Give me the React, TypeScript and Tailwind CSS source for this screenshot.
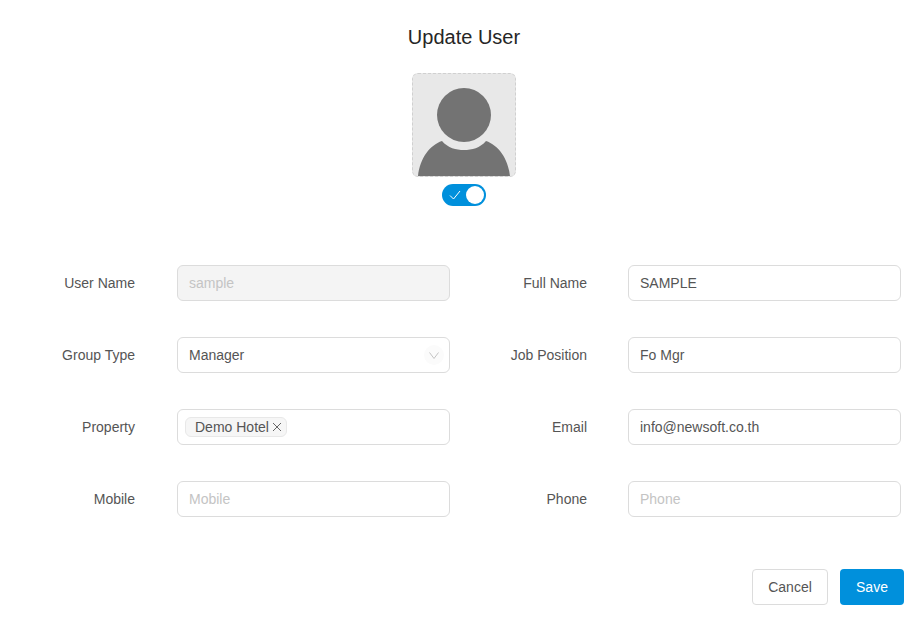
function Label({ children }: { children: string }) {
  return <label className="text-right text-[14px] leading-[36px] text-[#555555]">{children}</label>;
}

const inputBase = "flex h-9 w-[273px] items-center rounded-[6px] border border-[#dcdcdc] px-[11px] text-[14px] leading-[34px]";

function Field({ value, placeholder, disabled }: { value?: string; placeholder?: string; disabled?: boolean }) {
  const tone = disabled ? "bg-[#f4f4f4] text-[#c4c4c4]" : placeholder ? "bg-white text-[#c4c4c4]" : "bg-white text-[#555555]";
  return <div className={`${inputBase} ${tone}`}>{value ?? placeholder}</div>;
}

export default function App() {
  return (
    <div className="h-[626px] w-[922px] overflow-hidden bg-white font-['Liberation_Sans',Arial,sans-serif]">
      <div className="w-[928px]">
        <h1 className="pt-[24px] text-center text-[20px] leading-[26px] text-[#262626]">Update User</h1>
        <div className="mt-[23px] flex flex-col items-center">
          <div className="h-[104px] w-[104px] overflow-hidden rounded-[6px] border border-dashed border-[#d0d0d0] bg-[#e8e8e8]">
            <svg width="102" height="102" viewBox="0 0 102 102">
              <circle cx="51" cy="41" r="27" fill="#737373" />
              <path d="M5 102C7 84 17 71 29 67C35 74 43 76 51 76C59 76 67 74 73 67C85 71 95 84 97 102Z" fill="#737373" />
            </svg>
          </div>
          <div className="mt-[7px] flex h-[22px] w-[44px] items-center justify-between rounded-full bg-[#0090dc] pl-[7px] pr-[2px]">
            <svg width="12" height="10" viewBox="0 0 12 10" fill="none" stroke="white" strokeWidth="1">
              <path d="M1 5.5L4.5 9L11 1" />
            </svg>
            <span className="h-[18px] w-[18px] rounded-full bg-white" />
          </div>
        </div>
        <div className="mt-[59px] grid grid-cols-[135px_315px_137px_314px] items-center gap-y-[36px]">
          <Label>User Name</Label>
          <div className="ml-[42px]"><Field value="sample" disabled /></div>
          <Label>Full Name</Label>
          <div className="ml-[41px]"><Field value="SAMPLE" /></div>

          <Label>Group Type</Label>
          <div className="ml-[42px]">
            <div className={`${inputBase} justify-between bg-white pr-[5px] text-[#555555]`}>
              Manager
              <span className="flex h-[20px] w-[20px] items-center justify-center rounded-full bg-[#fbfbfb]">
                <svg width="10" height="7" viewBox="0 0 10 7" fill="none" stroke="#c4c4c4" strokeWidth="1">
                  <path d="M0.5 0.5L5 6.5L9.5 0.5" />
                </svg>
              </span>
            </div>
          </div>
          <Label>Job Position</Label>
          <div className="ml-[41px]"><Field value="Fo Mgr" /></div>

          <Label>Property</Label>
          <div className="ml-[42px]">
            <div className={`${inputBase} bg-white pl-[7px] text-[#555555]`}>
              <span className="flex h-[20px] items-center gap-[3px] rounded-[6px] border border-[#e8e8e8] bg-[#f6f6f6] pl-[9px] pr-[4px] text-[14px]">
                Demo Hotel
                <svg width="10" height="10" viewBox="0 0 10 10" stroke="#666666" strokeWidth="1">
                  <path d="M1 1L9 9M9 1L1 9" />
                </svg>
              </span>
            </div>
          </div>
          <Label>Email</Label>
          <div className="ml-[41px]"><Field value="info@newsoft.co.th" /></div>

          <Label>Mobile</Label>
          <div className="ml-[42px]"><Field placeholder="Mobile" /></div>
          <Label>Phone</Label>
          <div className="ml-[41px]"><Field placeholder="Phone" /></div>
        </div>
        <div className="mt-[52px] flex justify-end gap-[12px] pr-[24px]">
          <button className="h-9 w-[76px] rounded-[4px] border border-[#dcdcdc] bg-white text-[14px] text-[#555555]">Cancel</button>
          <button className="h-9 w-[64px] rounded-[4px] bg-[#0090dc] text-[14px] text-white">Save</button>
        </div>
      </div>
    </div>
  );
}
